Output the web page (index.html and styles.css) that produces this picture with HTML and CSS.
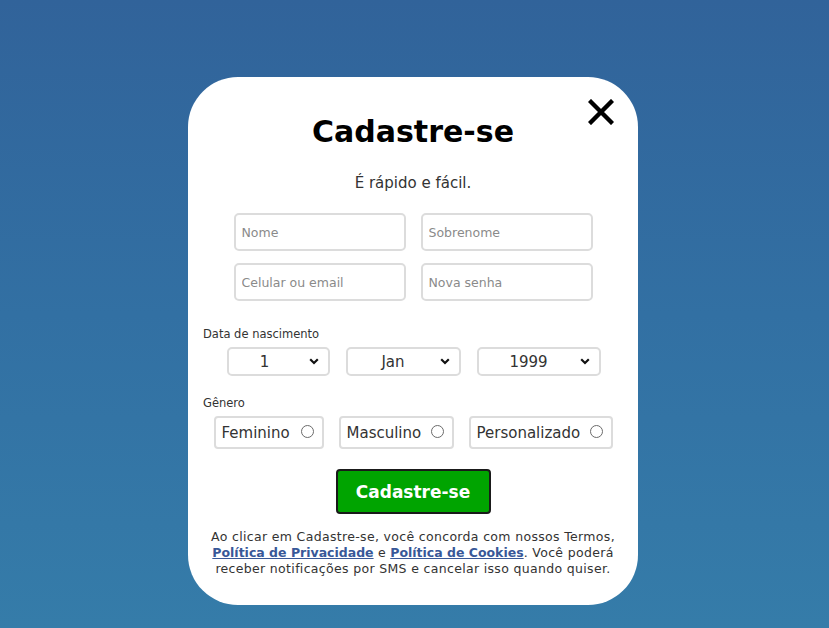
FILE: index.html
```html
<!DOCTYPE html>
<html lang="pt-BR">
<head>
<meta charset="utf-8">
<title>Cadastre-se</title>
<link rel="stylesheet" href="styles.css">
</head>
<body>
<div class="modal">
  <button class="close" aria-label="Fechar">
    <svg width="26" height="26" viewBox="0 0 26 26"><path d="M3 3 L23 23 M23 3 L3 23" stroke="#000" stroke-width="4.4" stroke-linecap="square" fill="none"/></svg>
  </button>
  <h1 class="title">Cadastre-se</h1>
  <p class="subtitle">É rápido e fácil.</p>
  <div class="fields">
    <input class="field" type="text" placeholder="Nome">
    <input class="field" type="text" placeholder="Sobrenome">
    <input class="field" type="text" placeholder="Celular ou email">
    <input class="field" type="password" placeholder="Nova senha">
  </div>
  <div class="label label-date">Data de nascimento</div>
  <div class="selects">
    <div class="sel sel-day"><span class="sel-val">1</span><svg class="chev" width="10" height="7" viewBox="0 0 10 7"><path d="M1.2 1.3 L5 5 L8.8 1.3" stroke="#111" stroke-width="2.2" fill="none"/></svg></div>
    <div class="sel sel-month"><span class="sel-val">Jan</span><svg class="chev" width="10" height="7" viewBox="0 0 10 7"><path d="M1.2 1.3 L5 5 L8.8 1.3" stroke="#111" stroke-width="2.2" fill="none"/></svg></div>
    <div class="sel sel-year"><span class="sel-val">1999</span><svg class="chev" width="10" height="7" viewBox="0 0 10 7"><path d="M1.2 1.3 L5 5 L8.8 1.3" stroke="#111" stroke-width="2.2" fill="none"/></svg></div>
  </div>
  <div class="label label-gender">Gênero</div>
  <div class="radios">
    <label class="radio r-f">Feminino <span class="dot"></span></label>
    <label class="radio r-m">Masculino <span class="dot"></span></label>
    <label class="radio r-p">Personalizado <span class="dot"></span></label>
  </div>
  <div class="btn-row"><button class="submit">Cadastre-se</button></div>
  <p class="terms"><span class="tl">Ao clicar em Cadastre-se, você concorda com nossos Termos,</span><br><a href="#">Política de Privacidade</a><span class="tx"> e </span><a href="#">Política de Cookies</a><span class="tx">. Você poderá</span><br><span class="tl">receber notificações por SMS e cancelar isso quando quiser.</span></p>
</div>
</body>
</html>
```

FILE: styles.css
```css
* { box-sizing: border-box; }
html, body { height: 100%; }
body {
  margin: 0;
  font-family: "DejaVu Sans", "Noto Sans", sans-serif;
  background: linear-gradient(180deg, #31639a 0%, #3270a3 50%, #357ca9 100%);
  overflow: hidden;
}
.modal {
  position: relative;
  width: 450px;
  margin: 77px auto 0 188px;
  background: #fff;
  border-radius: 50px;
  padding: 35px 15px 28px;
  color: #333;
}
.close {
  position: absolute;
  top: 22px;
  right: 24px;
  padding: 0;
  border: 0;
  background: none;
  width: 26px;
  height: 26px;
  display: block;
}
.close svg { display: block; }
.title {
  margin: 0;
  text-align: center;
  font-size: 30px;
  line-height: 40px;
  font-weight: bold;
  color: #000;
}
.subtitle {
  margin: 21px 0 0;
  text-align: center;
  font-size: 15px;
  line-height: 20px;
  color: #333;
}
.fields {
  margin: 20px auto 0;
  width: 359px;
  display: grid;
  grid-template-columns: 172px 172px;
  column-gap: 15px;
  row-gap: 12px;
}
.field {
  height: 38px;
  border: 2px solid #dcdcdc;
  border-radius: 5px;
  padding: 0 6px;
  font-family: inherit;
  font-size: 12.5px;
  color: #333;
  outline: none;
}
.field::placeholder { color: #8a8a8a; }
.label {
  font-size: 11.5px;
  line-height: 15px;
  color: #333;
}
.label-date { margin-top: 26px; }
.label-gender { margin-top: 20px; }
.selects {
  margin-top: 5px;
  display: flex;
  justify-content: center;
  gap: 16px;
  padding-left: 1px;
}
.sel {
  height: 29px;
  border: 2px solid #dcdcdc;
  border-radius: 5px;
  display: flex;
  align-items: center;
  position: relative;
  padding-right: 20px;
  font-size: 15px;
  color: #333;
}
.sel-val { flex: 1; text-align: center; }
.sel-day { width: 103px; padding-right: 27px; }
.sel-month { width: 115px; }
.sel-year { width: 124px; }
.chev {
  position: absolute;
  right: 9px;
  top: 9px;
}
.radios {
  margin-top: 5px;
  display: flex;
  justify-content: center;
  gap: 15px;
}
.radio {
  height: 33px;
  border: 2px solid #dcdcdc;
  border-radius: 4px;
  display: flex;
  align-items: center;
  justify-content: space-between;
  padding: 0 8px 0 6px;
  font-size: 15px;
  color: #333;
}
.r-f { width: 110px; }
.r-m { width: 115px; }
.r-p { width: 144px; }
.dot {
  width: 13px;
  height: 13px;
  border: 1px solid #6b6b6b;
  border-radius: 50%;
  margin-top: -3px;
  flex: none;
}
.btn-row {
  margin-top: 20px;
  display: flex;
  justify-content: center;
}
.submit {
  width: 155px;
  height: 45px;
  background: #00a400;
  border: 2px solid #1a1a1a;
  border-radius: 4px;
  color: #fff;
  font-family: inherit;
  font-weight: bold;
  font-size: 17px;
  padding: 0;
}
.terms {
  margin: 15px 0 0;
  text-align: center;
  font-size: 12.5px;
  line-height: 16px;
  color: #333;
}
.tl, .tx { letter-spacing: 0.33px; }
.terms a {
  color: #385898;
  font-weight: bold;
  text-decoration: underline;
}
```
